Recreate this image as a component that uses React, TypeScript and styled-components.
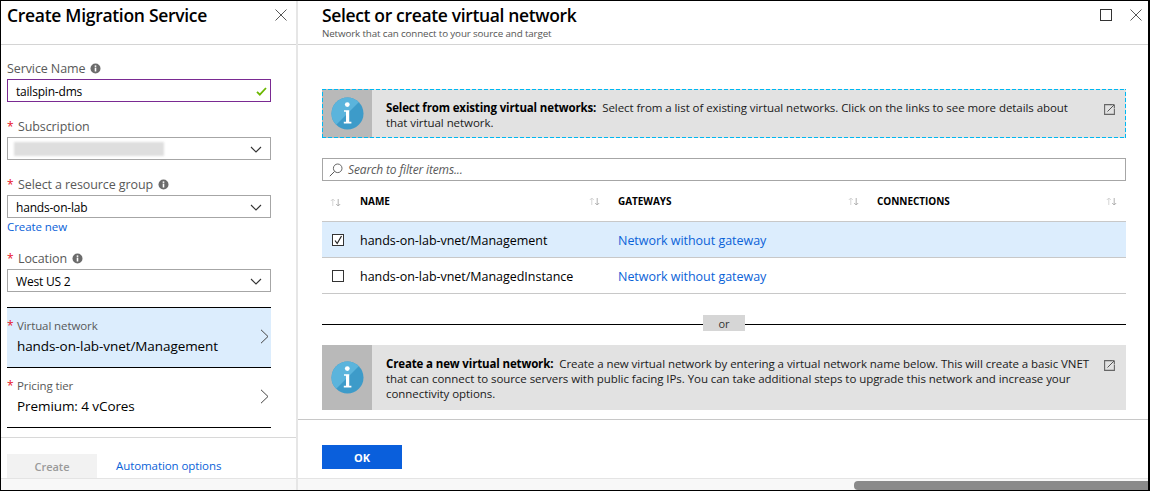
import React from "react";
import styled, { createGlobalStyle, css } from "styled-components";

const GlobalStyle = createGlobalStyle`
  html, body {
    margin: 0;
    padding: 0;
    background: #fff;
  }
  * {
    box-sizing: border-box;
  }
`;

const Frame = styled.div`
  width: 1150px;
  height: 491px;
  display: flex;
  overflow: hidden;
  border: 1px solid #000;
  border-right-width: 2px;
  font-family: "Open Sans", "Noto Sans", sans-serif;
  color: #000;
  background: #fff;
`;

const LeftBlade = styled.section`
  width: 295px;
  flex: none;
  display: flex;
  flex-direction: column;
  border-right: 2px solid #e6e6e6;
  box-sizing: content-box;
`;

const RightBlade = styled.section`
  flex: 1;
  min-width: 0;
  display: flex;
  flex-direction: column;
`;

const BladeHeader = styled.header`
  height: 44px;
  flex: none;
  display: flex;
  justify-content: space-between;
  border-bottom: 1px solid #d4d4d4;
`;

const LeftHeader = styled(BladeHeader)`
  padding: 2px 9px 0 6px;
`;

const RightHeader = styled(BladeHeader)`
  padding: 2px 6px 0 24px;
`;

const BladeTitle = styled.h1<{ $tight?: boolean }>`
  margin: 0;
  font-size: 17.5px;
  line-height: 24px;
  font-weight: 600;
  letter-spacing: ${(p) => (p.$tight ? "-0.35px" : "-0.3px")};
`;

const BladeSubtitle = styled.div`
  font-size: 9.8px;
  line-height: 13px;
  color: #555;
  letter-spacing: -0.13px;
`;

const HeaderIcons = styled.div`
  display: flex;
  gap: 18px;
  padding-top: 6px;
  height: 24px;
`;

const LeftBody = styled.div`
  flex: 1;
  padding: 15px 25px 0 6px;
`;

const FieldLabel = styled.label<{ $gap?: number }>`
  display: flex;
  align-items: center;
  height: 17px;
  margin-top: ${(p) => p.$gap ?? 0}px;
  font-size: 12.5px;
  color: #595959;
  letter-spacing: -0.1px;
  gap: 5px;
`;

const Star = styled.span`
  color: #e81123;
  font-size: 12px;
  width: 6px;
`;

const InputBox = styled.div<{ $active?: boolean }>`
  height: 23px;
  margin-top: 2px;
  display: flex;
  align-items: center;
  justify-content: space-between;
  padding: 1px ${(p) => (p.$active ? 3 : 8)}px 0 8px;
  border: 1px solid ${(p) => (p.$active ? "#7a2a92" : "#a6a6a6")};
  font-size: 12px;
  letter-spacing: -0.2px;
`;

const BlurredValue = styled.div`
  width: 150px;
  height: 14px;
  margin-left: -2px;
  margin-top: -1px;
  background: #dedede;
  filter: blur(1.2px);
`;

const CreateNew = styled.a`
  display: block;
  margin-top: 1px;
  font-size: 11.5px;
  line-height: 16px;
  color: #0a62d8;
  letter-spacing: -0.08px;
`;

const PickerGroup = styled.div`
  margin-top: 15px;
  border-top: 1px solid #000;
`;

const Picker = styled.div<{ $selected?: boolean }>`
  height: 60px;
  padding: 0 2px 0 0;
  display: flex;
  justify-content: space-between;
  align-items: center;
  border-bottom: 1px solid #000;
  background: ${(p) => (p.$selected ? "#dcedfd" : "#fff")};

  svg {
    margin-bottom: 2px;
  }
`;

const PickerLabel = styled.div`
  display: flex;
  gap: 4px;
  font-size: 11.5px;
  line-height: 16px;
  color: #595959;
  letter-spacing: -0.1px;
`;

const PickerValue = styled.div`
  padding-left: 10px;
  font-size: 13.5px;
  line-height: 24px;
  letter-spacing: -0.08px;
`;

const LeftFooter = styled.footer`
  height: 41px;
  flex: none;
  padding: 16px 0 0 6px;
  display: flex;
  align-items: flex-start;
  gap: 19px;
  border-top: 1px solid #d8d8d8;
`;

const GhostButton = styled.button`
  width: 90px;
  height: 24px;
  border: 0;
  background: #f2f2f2;
  color: #9a9a9a;
  font: 600 11px "Open Sans", sans-serif;
`;

const AutomationLink = styled.a`
  font-size: 11.5px;
  line-height: 24px;
  color: #0a62d8;
  letter-spacing: -0.08px;
`;

const ScrollStrip = styled.div`
  height: 12px;
  flex: none;
  display: flex;
  justify-content: flex-end;
  align-items: flex-end;
  background: #f8f8f8;
  border-top: 1px solid #e4e4e4;
`;

const ScrollThumb = styled.div`
  width: 294px;
  height: 9px;
  background: #8a8a8a;
  border-radius: 4px 0 0 4px;
`;

const RightBody = styled.div`
  flex: 1;
  min-height: 0;
  padding: 44px 22px 0 24px;
  border-bottom: 1px solid #c8c8c8;
`;

const dashColor = "#00b7f1";
const dashedEdge = css`
  &::after {
    content: "";
    position: absolute;
    inset: 0;
    pointer-events: none;
    background:
      repeating-linear-gradient(90deg, ${dashColor} 0 4px, transparent 4px 6px) top / 100% 1px no-repeat,
      repeating-linear-gradient(90deg, ${dashColor} 0 4px, transparent 4px 6px) bottom / 100% 1px no-repeat,
      repeating-linear-gradient(0deg, ${dashColor} 0 4px, transparent 4px 6px) left / 1px 100% no-repeat,
      repeating-linear-gradient(0deg, ${dashColor} 0 4px, transparent 4px 6px) right / 1px 100% no-repeat;
  }
`;

const InfoBox = styled.div<{ $height: number; $dashed?: boolean }>`
  position: relative;
  height: ${(p) => p.$height}px;
  display: flex;
  background: #e2e2e2;
  ${(p) => p.$dashed && dashedEdge}
`;

const InfoTile = styled.div`
  width: 50px;
  flex: none;
  display: flex;
  align-items: center;
  justify-content: center;
  background: #b9b9b9;
`;

const InfoText = styled.div`
  flex: 1;
  padding: 11px 14px 0 14px;
  font-size: 11.5px;
  line-height: 15px;
  letter-spacing: -0.06px;
  color: #1a1a1a;

  b {
    font-weight: 700;
    color: #000;
    margin-right: 3px;
    letter-spacing: -0.14px;
  }
`;

const ExternalSlot = styled.div`
  width: 22px;
  flex: none;
  padding-top: 9px;
`;

const SearchBox = styled.div`
  height: 23px;
  margin-top: 20px;
  display: flex;
  align-items: center;
  gap: 5px;
  padding-left: 6px;
  border: 1px solid #a6a6a6;
  font-size: 12px;
  font-style: italic;
  color: #595959;
  letter-spacing: -0.14px;
`;

const gridColumns = "38px 258px 259px 1fr";

const HeaderRow = styled.div`
  height: 41px;
  display: grid;
  grid-template-columns: ${gridColumns};
  align-items: center;
  border-bottom: 1px solid #c8c8c8;
`;

const HeadCell = styled.div<{ $end?: number }>`
  display: flex;
  justify-content: space-between;
  align-items: center;
  padding-right: ${(p) => p.$end ?? 18}px;
  font-size: 10px;
  font-weight: 700;
  letter-spacing: -0.05px;
`;

const SortCell = styled.div`
  padding-left: 8px;
`;

const BodyRow = styled.div<{ $selected?: boolean }>`
  height: 36px;
  padding-top: 2px;
  display: grid;
  grid-template-columns: ${gridColumns};
  align-items: center;
  border-bottom: 1px solid #c8c8c8;
  background: ${(p) => (p.$selected ? "#dcedfd" : "#fff")};
  font-size: 12.5px;
  letter-spacing: -0.03px;
`;

const CheckCell = styled.div`
  display: flex;
  padding-left: 10px;
`;

const GatewayLink = styled.a`
  color: #0a62d8;
`;

const OrDivider = styled.div`
  margin-top: 21px;
  margin-bottom: 14px;
  display: flex;
  align-items: center;
  height: 16px;
`;

const OrLine = styled.div`
  flex: 1;
  height: 1px;
  margin-top: 2px;
  background: #000;
`;

const OrChip = styled.div`
  width: 42px;
  height: 16px;
  display: flex;
  align-items: center;
  justify-content: center;
  background: #d6d6d6;
  font-size: 11px;
  color: #333;
`;

const RightFooter = styled.footer`
  height: 58px;
  flex: none;
  padding: 25px 0 0 24px;
`;

const PrimaryButton = styled.button`
  display: block;
  width: 80px;
  height: 24px;
  border: 0;
  background: #0a5fdc;
  color: #fff;
  font: 700 11px "Open Sans", sans-serif;
`;

const InfoIcon = () => (
  <svg width="11" height="11" viewBox="0 0 11 11">
    <circle cx="5.5" cy="5.5" r="5" fill="#6b6b6b" />
    <rect x="4.7" y="4.6" width="1.6" height="3.9" fill="#fff" />
    <rect x="4.7" y="2.4" width="1.6" height="1.5" fill="#fff" />
  </svg>
);

const ChevronDown = () => (
  <svg width="12" height="7" viewBox="0 0 12 7">
    <path d="M1 1l5 5 5-5" fill="none" stroke="#333" strokeWidth="1.1" />
  </svg>
);

const ChevronRight = () => (
  <svg width="9" height="15" viewBox="0 0 9 15">
    <path d="M1 .8l7 6.7-7 6.7" fill="none" stroke="#444" strokeWidth="1" />
  </svg>
);

const CloseIcon = () => (
  <svg width="12" height="12" viewBox="0 0 12 12">
    <path d="M.5.5l11 11M11.5.5l-11 11" stroke="#444" strokeWidth="0.9" fill="none" />
  </svg>
);

const MaximizeIcon = () => (
  <svg width="12" height="12" viewBox="0 0 12 12">
    <rect x=".5" y=".5" width="11" height="11" fill="none" stroke="#333" strokeWidth="1" />
  </svg>
);

const CheckMark = () => (
  <svg width="11" height="9" viewBox="0 0 11 9">
    <path d="M1 4.8l2.8 2.8L10 1" fill="none" stroke="#6bb700" strokeWidth="1.8" />
  </svg>
);

const SearchIcon = () => (
  <svg width="14" height="14" viewBox="0 0 14 14">
    <circle cx="8.7" cy="5.3" r="4.3" fill="none" stroke="#555" strokeWidth="0.9" />
    <path d="M5.6 8.4L.8 13.2" stroke="#555" strokeWidth="1" />
  </svg>
);

const SortIcon = () => (
  <svg width="11" height="9" viewBox="0 0 11 9">
    <path d="M2.8 8V1M.8 3l2-2 2 2" fill="none" stroke="#d0d0d0" strokeWidth="0.9" />
    <path d="M8.2 1v7M6.2 6l2 2 2-2" fill="none" stroke="#a8a8a8" strokeWidth="0.9" />
  </svg>
);

const ExternalIcon = () => (
  <svg width="11" height="11" viewBox="0 0 11 11">
    <path d="M7.5.6H.6v9.8h9.8V5" fill="none" stroke="#666" strokeWidth="1.1" />
    <path d="M3.5 7.5L10 1M6.5.7h3.8v3.8" fill="none" stroke="#555" strokeWidth="1" />
  </svg>
);

const CheckBox = ({ checked }: { checked?: boolean }) => (
  <svg width="13" height="13" viewBox="0 0 13 13">
    <rect x=".5" y=".5" width="11" height="11" fill="#fff" stroke="#333" strokeWidth="1" />
    {checked && <path d="M3 6.5l2.2 3L9.5 2" fill="none" stroke="#222" strokeWidth="1.2" />}
  </svg>
);

const BigInfoIcon = ({ id }: { id: string }) => (
  <svg width="33" height="33" viewBox="0 0 33 33">
    <defs>
      <clipPath id={id}>
        <circle cx="16.5" cy="16.5" r="16" />
      </clipPath>
    </defs>
    <circle cx="16.5" cy="16.5" r="16" fill="#3d9bc9" />
    <path d="M0 33V0h33z" fill="#5bb4dc" clipPath={`url(#${id})`} />
    <circle cx="16.3" cy="7.6" r="2.4" fill="#fff" />
    <path d="M13 13.2h5.2v11.6h2.2v1.6h-7.6v-1.6h2.2v-10h-2z" fill="#fff" />
  </svg>
);

const networks = [
  { name: "hands-on-lab-vnet/Management", selected: true },
  { name: "hands-on-lab-vnet/ManagedInstance", selected: false },
];

function App() {
  return (
    <Frame>
      <GlobalStyle />
      <LeftBlade>
        <LeftHeader>
          <BladeTitle>Create Migration Service</BladeTitle>
          <HeaderIcons>
            <CloseIcon />
          </HeaderIcons>
        </LeftHeader>
        <LeftBody>
          <FieldLabel>
            Service Name <InfoIcon />
          </FieldLabel>
          <InputBox $active>
            tailspin-dms
            <CheckMark />
          </InputBox>
          <FieldLabel $gap={16}>
            <Star>*</Star> Subscription
          </FieldLabel>
          <InputBox>
            <BlurredValue />
            <ChevronDown />
          </InputBox>
          <FieldLabel $gap={16}>
            <Star>*</Star> Select a resource group <InfoIcon />
          </FieldLabel>
          <InputBox>
            hands-on-lab
            <ChevronDown />
          </InputBox>
          <CreateNew>Create new</CreateNew>
          <FieldLabel $gap={15}>
            <Star>*</Star> Location <InfoIcon />
          </FieldLabel>
          <InputBox>
            West US 2
            <ChevronDown />
          </InputBox>
          <PickerGroup>
            <Picker $selected>
              <div>
                <PickerLabel>
                  <Star>*</Star> Virtual network
                </PickerLabel>
                <PickerValue>hands-on-lab-vnet/Management</PickerValue>
              </div>
              <ChevronRight />
            </Picker>
            <Picker>
              <div>
                <PickerLabel>
                  <Star>*</Star> Pricing tier
                </PickerLabel>
                <PickerValue>Premium: 4 vCores</PickerValue>
              </div>
              <ChevronRight />
            </Picker>
          </PickerGroup>
        </LeftBody>
        <LeftFooter>
          <GhostButton>Create</GhostButton>
          <AutomationLink>Automation options</AutomationLink>
        </LeftFooter>
        <ScrollStrip />
      </LeftBlade>
      <RightBlade>
        <RightHeader>
          <div>
            <BladeTitle $tight>Select or create virtual network</BladeTitle>
            <BladeSubtitle>Network that can connect to your source and target</BladeSubtitle>
          </div>
          <HeaderIcons>
            <MaximizeIcon />
            <CloseIcon />
          </HeaderIcons>
        </RightHeader>
        <RightBody>
          <InfoBox $height={49} $dashed>
            <InfoTile>
              <BigInfoIcon id="info-a" />
            </InfoTile>
            <InfoText>
              <b>Select from existing virtual networks:</b> Select from a list of existing virtual
              networks. Click on the links to see more details about that virtual network.
            </InfoText>
            <ExternalSlot>
              <ExternalIcon />
            </ExternalSlot>
          </InfoBox>
          <SearchBox>
            <SearchIcon />
            Search to filter items...
          </SearchBox>
          <HeaderRow>
            <SortCell>
              <SortIcon />
            </SortCell>
            <HeadCell>
              NAME <SortIcon />
            </HeadCell>
            <HeadCell>
              GATEWAYS <SortIcon />
            </HeadCell>
            <HeadCell $end={9}>
              CONNECTIONS <SortIcon />
            </HeadCell>
          </HeaderRow>
          {networks.map((n) => (
            <BodyRow key={n.name} $selected={n.selected}>
              <CheckCell>
                <CheckBox checked={n.selected} />
              </CheckCell>
              <div>{n.name}</div>
              <GatewayLink>Network without gateway</GatewayLink>
              <div />
            </BodyRow>
          ))}
          <OrDivider>
            <OrLine />
            <OrChip>or</OrChip>
            <OrLine />
          </OrDivider>
          <InfoBox $height={65}>
            <InfoTile>
              <BigInfoIcon id="info-b" />
            </InfoTile>
            <InfoText>
              <b>Create a new virtual network:</b> Create a new virtual network by entering a
              virtual network name below. This will create a basic VNET that can connect to source
              servers with public facing IPs. You can take additional steps to upgrade this network
              and increase your connectivity options.
            </InfoText>
            <ExternalSlot>
              <ExternalIcon />
            </ExternalSlot>
          </InfoBox>
        </RightBody>
        <RightFooter>
          <PrimaryButton>OK</PrimaryButton>
        </RightFooter>
        <ScrollStrip>
          <ScrollThumb />
        </ScrollStrip>
      </RightBlade>
    </Frame>
  );
}

export default App;
